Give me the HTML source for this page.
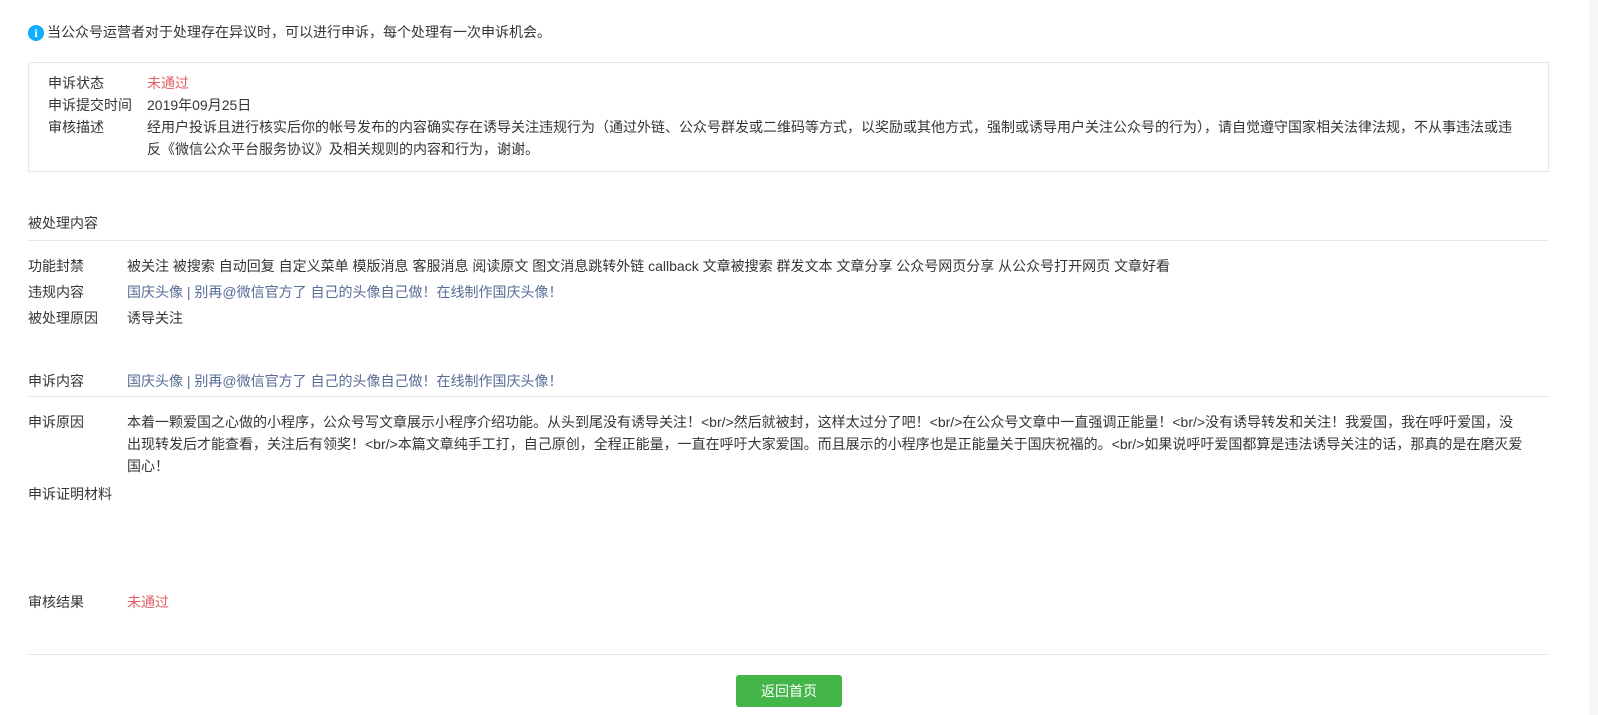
<!DOCTYPE html>
<html><head><meta charset="utf-8"><style>
body{margin:0;width:1598px;height:715px;background:#fff;font-family:"Liberation Sans","Noto Sans CJK SC",sans-serif;font-size:14px;color:#353535;position:relative;overflow:hidden}
.a{position:absolute;white-space:nowrap;line-height:22px}
.l{position:absolute;left:28px;width:1521px;height:1px;background:#e7e7eb}
.red{color:#e15f63}.lk{color:#576b95}
</style></head><body>
<div style="position:absolute;right:0;top:0;width:9px;height:715px;background:#f5f6f8"></div>
<div class="a" style="left:28px;top:21px"><span style="display:inline-block;width:16px;height:16px;border-radius:50%;background:#10aeff;color:#fff;font-size:12px;line-height:16px;text-align:center;font-weight:bold;vertical-align:0px;margin-right:3px;font-family:'Liberation Serif',serif">i</span>当公众号运营者对于处理存在异议时，可以进行申诉，每个处理有一次申诉机会。</div>
<div style="position:absolute;left:28px;top:62px;width:1519px;height:108px;border:1px solid #e7e7eb"></div>
<div class="a" style="left:48px;top:72px">申诉状态</div><div class="a red" style="left:147px;top:72px">未通过</div>
<div class="a" style="left:48px;top:94px">申诉提交时间</div><div class="a" style="left:147px;top:94px">2019年09月25日</div>
<div class="a" style="left:48px;top:116px">审核描述</div><div class="a" style="left:147px;top:116px">经用户投诉且进行核实后你的帐号发布的内容确实存在诱导关注违规行为（通过外链、公众号群发或二维码等方式，以奖励或其他方式，强制或诱导用户关注公众号的行为），请自觉遵守国家相关法律法规，不从事违法或违<br>反《微信公众平台服务协议》及相关规则的内容和行为，谢谢。</div>
<div class="a" style="left:28px;top:212px">被处理内容</div>
<div class="l" style="top:240px"></div>
<div class="a" style="left:28px;top:255px">功能封禁</div><div class="a" style="left:127px;top:255px">被关注 被搜索 自动回复 自定义菜单 模版消息 客服消息 阅读原文 图文消息跳转外链 callback 文章被搜索 群发文本 文章分享 公众号网页分享 从公众号打开网页 文章好看</div>
<div class="a" style="left:28px;top:281px">违规内容</div><div class="a lk" style="left:127px;top:281px">国庆头像 | 别再@微信官方了 自己的头像自己做！在线制作国庆头像！</div>
<div class="a" style="left:28px;top:307px">被处理原因</div><div class="a" style="left:127px;top:307px">诱导关注</div>
<div class="a" style="left:28px;top:370px">申诉内容</div><div class="a lk" style="left:127px;top:370px">国庆头像 | 别再@微信官方了 自己的头像自己做！在线制作国庆头像！</div>
<div class="l" style="top:396px"></div>
<div class="a" style="left:28px;top:411px">申诉原因</div><div class="a" style="left:127px;top:411px">本着一颗爱国之心做的小程序，公众号写文章展示小程序介绍功能。从头到尾没有诱导关注！&lt;br/&gt;然后就被封，这样太过分了吧！&lt;br/&gt;在公众号文章中一直强调正能量！&lt;br/&gt;没有诱导转发和关注！我爱国，我在呼吁爱国，没<br>出现转发后才能查看，关注后有领奖！&lt;br/&gt;本篇文章纯手工打，自己原创，全程正能量，一直在呼吁大家爱国。而且展示的小程序也是正能量关于国庆祝福的。&lt;br/&gt;如果说呼吁爱国都算是违法诱导关注的话，那真的是在磨灭爱<br>国心！</div>
<div class="a" style="left:28px;top:483px">申诉证明材料</div>
<div class="a" style="left:28px;top:591px">审核结果</div><div class="a red" style="left:127px;top:591px">未通过</div>
<div class="l" style="top:654px"></div>
<div style="position:absolute;left:736px;top:675px;width:106px;height:32px;background:#44b549;border-radius:3px;color:#fff;text-align:center;line-height:32px;font-size:14px">返回首页</div>
</body></html>
